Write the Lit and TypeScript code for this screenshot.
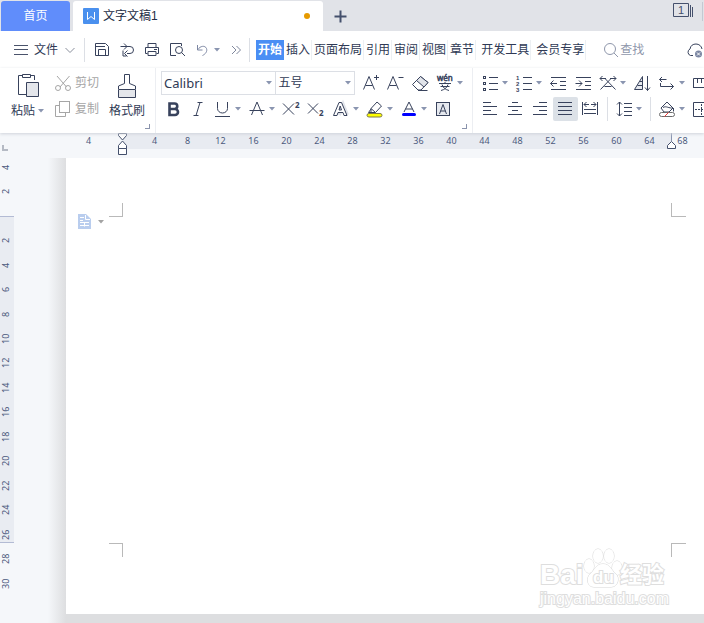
import { LitElement, html, svg, css, nothing, TemplateResult, SVGTemplateResult } from "lit";
import { customElement } from "lit/decorators.js";
import { classMap } from "lit/directives/class-map.js";

type Glyph = SVGTemplateResult;

const ICONS: Record<string, Glyph> = {
  save: svg`<path d="M2.500 14.500v-12h10l3 3v9z"/><path d="M5.500 14.500v-6h7v6M3 5.500h9"/>`,
  exportIcon: svg`<path d="M2.500 5.500h9.500a3.500 3.500 0 0 1 0 7H9M6 2.500l3 3-3 3M5 9.500v5.500h3.500M9.500 9.500l-3 3 3 3"/>`,
  print: svg`<path d="M5 6V2.500h8V6M4.500 12.500h-2V6.500h13v6h-2"/><path d="M5 10.500h8v4H5zM11 8.500h3"/>`,
  preview: svg`<path d="M8 14.500H2.500v-12h11V5"/><circle cx="11" cy="9" r="3.500"/><path d="M13.500 11.500l3.500 3.500"/>`,
  undo: svg`<g stroke="#7d87a3"><path d="M4.500 4v5h5M5 8.500C7 5 12 4 13.500 7.500c1 3-1 5.500-4 7"/></g>`,
  more: svg`<path stroke="#7f879c" d="M5 5l4 4-4 4M9.500 5l4 4-4 4"/>`,
  growFont: svg`<path d="M2.500 15.500L8 2.500l5.500 13M4.500 11.500h7M13 3.500h5M15.500 1v5"/>`,
  shrinkFont: svg`<path d="M1.500 15.500L7 2.500l5.500 13M3.500 11.500h7M12.500 3.500h5"/>`,
  eraser: svg`<path d="M1.500 10.500l8-8 7.500 6-7 7.500H7z"/><path fill="#e1e4ea" d="M5.500 6.500l4-4L17 8.500l-4 4.500z"/><path d="M7 16.500h9.500"/>`,
  pinyin: svg`<text x="1" y="7" font-size="8" stroke-width=".5" fill="#38425c">wén</text><path d="M3 9.500h12M9 8v2M4.500 12.500h9M5 16.500c4-1 6-3 7-6M13 16.500c-4-1-6-3-7-6"/>`,
  bold: svg`<path stroke-width="2.600" d="M5.500 3.500h5a2.700 2.700 0 0 1 0 5.500H5.500zM5.500 9H11a3 3 0 0 1 0 6H5.500z"/>`,
  italic: svg`<path d="M8.500 2.500h5M4.500 15.500h5M11 2.500l-4 13"/>`,
  underline: svg`<path d="M3.500 2v6.500a5 4.500 0 0 0 10 0V2M1 16.500h15"/>`,
  strike: svg`<path d="M3.500 15L9 2l5.500 13M1.500 10.500h15"/>`,
  superscript: svg`<path d="M1 3.500l11 11M12 3.500L1 14.500"/><text x="13" y="8" font-size="8" font-weight="700" stroke="none" fill="#38425c">2</text>`,
  subscript: svg`<path d="M1 3.500l10 10M11 3.500L1 13.500"/><text x="12" y="16" font-size="8" font-weight="700" stroke="none" fill="#38425c">2</text>`,
  textEffect: svg`<path stroke="#e1e4ea" stroke-width="4" d="M7 15l4-10 4 10"/><path fill="#fff" d="M1.500 15.500L7 2.500h2.500l5.500 13h-3l-1-3H6l-1 3zM7 10h2.500L8.200 6z"/>`,
  highlighter: svg`<path fill="#fff" d="M5 8.500l6-6.500 4.500 4-6 6.500H5z"/><path d="M5 8.500l4.500 4M5 9l-2.500 3.500h3"/><rect x="1" y="13.500" width="15" height="3.500" rx="2" fill="#ff0" stroke="#7e7a4a"/>`,
  fontColor: svg`<path d="M4 12L9 2l5 10M5.500 9h7"/><rect x="2" y="13" width="14" height="3" rx="1.500" fill="#00f" stroke="none"/>`,
  charShade: svg`<rect x="2.500" y="2.500" width="13" height="13" fill="#e6e9ef"/><path d="M5.500 14L9 4.500l3.500 9.500M6.500 11h5"/>`,
  bullets: svg`<g fill="#fff"><rect x="2.500" y="2.500" width="2" height="2"/><rect x="2.500" y="8.500" width="2" height="2"/><rect x="2.500" y="14.500" width="2" height="2"/></g><path d="M8 3.500h9M8 9.500h9M8 15.500h9"/>`,
  numbers: svg`<g class="digits"><text x="1" y="6">1</text><text x="1" y="12">2</text><text x="1" y="18">3</text></g><path d="M8 3.500h9M8 9.500h9M8 15.500h9"/>`,
  outdent: svg`<path d="M2 3.500h15M11 7.500h6M11 11.500h6M2 15.500h15M1.500 9.500H8M4.500 6.500l-3 3 3 3"/>`,
  indent: svg`<path d="M2 3.500h15M11 7.500h6M11 11.500h6M2 15.500h15M1.500 9.500H8M5 6.500l3 3-3 3"/>`,
  asian: svg`<path d="M1 4.500h6M11 4.500h6M3.500 2L1 4.500 3.500 7M14.500 2L17 4.500 14.500 7M1.500 15.500L12 4.500M16.500 15.500L6 4.500M5.500 12.500h7"/>`,
  sort: svg`<path fill="#e6e9ef" d="M1.500 15.500L9.500 2.500v13z"/><path d="M4.500 11.500h5M7 7.500h2.500M14.500 2v14.500M12 13.500l2.500 3 2.500-3"/>`,
  wrap: svg`<path d="M8.500 5.500h-7M4 3L1.500 5.500 4 8M2.500 9v3.500h13M12.500 9.500L15.500 12.500l-3 3"/>`,
  tabStops: svg`<path d="M1.500 14V4.500H20M5.500 5v4M9.500 5v4M13.500 5v4M1.500 13.500h18"/>`,
  alignLeft: svg`<path d="M2 2.500h8M2 6.500h14M2 10.500h8M2 14.500h14"/>`,
  alignCenter: svg`<path d="M6 2.500h6M2 6.500h14M6 10.500h6M2 14.500h14"/>`,
  alignRight: svg`<path d="M8 2.500h8M2 6.500h14M8 10.500h8M2 14.500h14"/>`,
  justify: svg`<path d="M2 2.500h14M2 6.500h14M2 10.500h14M2 14.500h14"/>`,
  distribute: svg`<path d="M1.500 2v13M16.500 2v13M3 4.500h5M10 4.500h5M5.500 2L3 4.500 5.500 7M12.500 2L15 4.500 12.500 7M3 9.500h12M3 13.500h12"/>`,
  lineSpacing: svg`<path d="M4.500 2v14M2 4.500L4.500 2 7 4.500M2 13.500L4.500 16 7 13.500M9 3.500h8M9 7.500h8M9 11.500h8M9 15.500h8"/>`,
  shading: svg`<path fill="#fff" d="M3 8l6-6 6 6-4 4H6z"/><path d="M5 7.500c3-2 6 1 10 .5M15.500 8v3.500"/><rect x="1.500" y="12.500" width="15" height="4" rx="2" fill="#fff" stroke="#6c6c6c"/><path stroke="#f03b3b" d="M6.500 16.500l4-4"/>`,
  borders: svg`<path d="M1.500 2.500h15v14h-15z"/><path stroke-dasharray="2 1" d="M3 9.500h12M9.500 4v11"/>`,
  scissors: svg`<g stroke="#a6a6a6"><path d="M3 2l9.500 11M15.500 2L6 13"/><circle cx="4" cy="14" r="2.500"/><circle cx="14" cy="14" r="2.500"/></g>`,
  copy: svg`<g stroke="#a6a6a6"><path d="M5.500 5.500h-4v11h10v-4"/><rect x="5.500" y="1.500" width="10" height="11"/></g>`,
  search: svg`<g stroke="#8f97ab"><circle cx="8" cy="8" r="5.500"/><path d="M12 12l4 4"/></g>`,
  cloud: svg`<path d="M7 14.500H4.500a3.500 3.500 0 0 1-.5-6.500C4.500 4.500 7 3 10 3c3 0 5.500 2 6 5"/><circle cx="12.500" cy="13" r="3.500" fill="#7c87a3" stroke="none"/><path stroke="#fff" d="M11 11.500l3 3M14 11.500l-3 3"/>`,
};

const icon = (name: string) => html`<svg class="icon" viewBox="0 0 18 18" aria-hidden="true">${ICONS[name]}</svg>`;
const caret = html`<svg class="caret" viewBox="0 0 6 4" aria-hidden="true"><path d="M0 0h6L3 3.500z"/></svg>`;

interface Tool {
  icon: string;
  label: string;
  menu?: boolean;
  active?: boolean;
}

const t = (icon: string, label: string, menu = false, active = false): Tool => ({ icon, label, menu, active });

const tool = (d: Tool): TemplateResult => html`
  <button class=${classMap({ tool: true, split: !!d.menu, active: !!d.active })} aria-label=${d.label} title=${d.label}>
    ${icon(d.icon)}${d.menu ? caret : nothing}
  </button>`;

const QUICK = [t("save", "保存"), t("exportIcon", "输出"), t("print", "打印"), t("preview", "打印预览"), t("undo", "撤消", true), t("more", "更多")];
const FONT_SIZE = [t("growFont", "增大字号"), t("shrinkFont", "减小字号"), t("eraser", "清除格式"), t("pinyin", "拼音指南", true)];
const FONT_STYLE = [
  t("bold", "加粗"), t("italic", "倾斜"), t("underline", "下划线", true), t("strike", "删除线", true),
  t("superscript", "上标"), t("subscript", "下标"), t("textEffect", "文字效果", true),
  t("highlighter", "突出显示", true), t("fontColor", "字体颜色", true), t("charShade", "字符底纹"),
];
const PARA_TOP = [
  t("bullets", "项目符号", true), t("numbers", "编号", true), t("outdent", "减少缩进量"), t("indent", "增加缩进量"),
  t("asian", "中文版式", true), t("sort", "排序"), t("wrap", "显示编辑标记", true), t("tabStops", "制表位"),
];
const ALIGN = [
  t("alignLeft", "左对齐"), t("alignCenter", "居中对齐"), t("alignRight", "右对齐"),
  t("justify", "两端对齐", false, true), t("distribute", "分散对齐"),
];
const MENUS = ["开始", "插入", "页面布局", "引用", "审阅", "视图", "章节"];
const EXTRA_MENUS = ["开发工具", "会员专享"];

const H_MARKS = ["4", "", ...Array.from({ length: 17 }, (_, i) => String((i + 1) * 4))];
const V_MARKS = ["4", "2", "", ...Array.from({ length: 15 }, (_, i) => String((i + 1) * 2))];

@customElement("app-root")
export class AppRoot extends LitElement {
  static styles = css`
    :host {
      display: flex;
      flex-direction: column;
      min-height: 100vh;
      overflow: hidden;
      font: 12px/16px "Liberation Sans", "Noto Sans CJK SC", sans-serif;
      color: #2f3a55;
      background: #f5f7fa;
    }
    * { box-sizing: border-box; }
    button, input, select {
      font: inherit;
      color: inherit;
      border: 0;
      background: none;
      padding: 0;
      margin: 0;
      outline: 0;
    }
    svg { display: block; flex: none; overflow: visible; }
    .icon { width: 18px; height: 18px; }
    .icon, .big { fill: none; stroke: #38425c; font-family: "Noto Sans", sans-serif; }
    .digits { font: 700 6px "Liberation Sans", sans-serif; stroke: none; fill: #38425c; }
    .caret { width: 6px; height: 4px; fill: #8a95b0; }

    .tabs {
      display: flex;
      height: 31px;
      padding: 1px 1px 0;
      background: #e1e3e8;
    }
    .home {
      width: 69px;
      margin-right: 3px;
      border-radius: 3px 3px 0 0;
      background: #608dfb;
      color: #fff;
    }
    .doc {
      display: flex;
      align-items: center;
      gap: 4px;
      width: 250px;
      padding: 0 13px 0 10px;
      border-radius: 3px 3px 0 0;
      background: #fff;
      color: #222c44;
    }
    .logo { width: 16px; height: 16px; }
    .unsaved {
      width: 6px;
      height: 6px;
      margin-left: auto;
      border-radius: 50%;
      background: #e69a00;
    }
    .add { width: 13px; margin-left: 11px; }
    .add svg, .windows svg { fill: none; stroke: #44506c; }
    .windows {
      display: flex;
      align-items: flex-start;
      gap: 9px;
      margin-left: auto;
      padding-top: 1px;
    }
    .edge { width: 1px; height: 19px; background: #c4c9d2; }

    .menubar {
      display: flex;
      align-items: center;
      height: 37px;
      background: #fff;
    }
    .file { display: flex; align-items: center; gap: 6px; padding: 0 8px 0 14px; }
    .file svg { fill: none; stroke: #4a536b; }
    .rule { width: 1px; height: 24px; flex: none; background: #dcdfe5; }
    .row { display: flex; align-items: center; height: 24px; }
    .quick { padding-left: 5px; }
    .tool {
      display: flex;
      align-items: center;
      flex: none;
      gap: 3px;
      width: 25px;
      height: 24px;
      padding-left: 3px;
    }
    .split { width: 34px; }
    .active { background: #dce1e7; border-radius: 2px; }
    nav { display: flex; padding-left: 6px; }
    nav a {
      height: 20px;
      padding: 2px 1px 2px 2px;
      border-right: 1px solid #edf0f3;
      color: inherit;
      text-decoration: none;
      white-space: nowrap;
    }
    nav a.current {
      background: #4a8ef4;
      border-color: #4a8ef4;
      color: #fff;
      font-weight: 700;
    }
    nav a.extra { margin-left: 3px; }
    .search { display: flex; align-items: center; margin-left: 16px; color: #8f97ab; }
    .search input { width: 48px; }
    .search input::placeholder { color: #8f97ab; opacity: 1; }
    .cloud { margin-left: auto; }

    .ribbon {
      display: flex;
      height: 65px;
      flex: none;
      background: #fff;
      box-shadow: 0 1px 3px #cfd3da;
      position: relative;
      z-index: 1;
    }
    .group {
      position: relative;
      display: flex;
      flex-direction: column;
      gap: 2px;
      flex: none;
      padding: 3px 5px 0;
      border-right: 1px solid #eceef2;
    }
    .group:last-child { border: 0; }
    .font { width: 317px; }
    .clipboard { flex-direction: row; gap: 10px; width: 156px; padding-left: 11px; }
    .tall {
      display: flex;
      flex-direction: column;
      align-items: center;
      gap: 4px;
      height: 48px;
    }
    .tall span { display: flex; align-items: center; gap: 3px; white-space: nowrap; }
    .big { width: 24px; height: 28px; }
    .stack { display: flex; flex-direction: column; gap: 2px; }
    .side { display: flex; align-items: center; gap: 3px; height: 24px; color: #a6a6a6; }
    .launcher {
      position: absolute;
      right: 5px;
      bottom: 4px;
      width: 5px;
      height: 5px;
      border: solid #8a93ac;
      border-width: 0 1px 1px 0;
    }
    .pick {
      position: relative;
      display: flex;
      align-items: center;
      height: 24px;
      border: 1px solid #dcdfe5;
    }
    .pick select {
      appearance: none;
      width: 100%;
      height: 22px;
      padding-left: 2px;
      font: 13px/20px "Noto Sans", "Noto Sans CJK SC", sans-serif;
    }
    .pick .caret { position: absolute; right: 3px; pointer-events: none; }
    .family { width: 116px; }
    .size { width: 80px; margin: 0 3px 0 -1px; }
    .size select { font-size: 12px; }
    .row .rule { margin: 0 4px; }

    .work { display: grid; grid-template-columns: 14px minmax(0, 1fr); flex: 1; }
    .corner { height: 22px; padding: 12px 0 0 2px; }
    .corner i { display: block; width: 6px; height: 6px; border: solid #b5bac4; border-width: 0 0 2px 2px; }
    .vruler {
      display: grid;
      grid-auto-rows: 24px 25px;
      background: linear-gradient(#f5f7fa 61px, #b3bbd4 61px 62px, #e9ecf2 62px 387px, #b3bbd4 387px 388px, #f5f7fa 388px);
    }
    .vruler span {
      writing-mode: vertical-rl;
      transform: rotate(180deg);
      text-align: center;
      line-height: 12px;
    }
    .vruler, .hruler { font-family: "Noto Sans", sans-serif; font-size: 9px; color: #4c5a7d; }
    .hruler {
      position: relative;
      display: flex;
      height: 16px;
      padding-left: 58px;
      margin-bottom: 9px;
      background: linear-gradient(90deg, #f5f7fa 108px, #e8ebf1 108px 657px, #f5f7fa 657px);
    }
    .hruler span { width: 33px; flex: none; text-align: center; }
    .marker { position: absolute; top: 0; width: 11px; height: 23px; fill: #fff; stroke: #44506c; }
    .first { left: 103px; }
    .last { left: 652px; }
    .canvas {
      display: flex;
      flex-direction: column;
      min-width: 0;
    }
    .desk {
      display: flex;
      flex: 1;
      padding: 0 0 9px 52px;
      background: linear-gradient(90deg, #f5f7fa 34px, #dddee0 52px);
    }
    .page {
      position: relative;
      display: flex;
      flex-direction: column;
      justify-content: space-between;
      flex: 1;
      padding: 45px 18px 57px 43px;
      background: #fff;
    }
    .crops { display: flex; justify-content: space-between; }
    .crops i { width: 14px; height: 14px; border: 0 solid #b9b9b9; }
    .crops i:first-child { border-right-width: 1px; }
    .crops i:last-child { width: 15px; border-left-width: 1px; }
    .top i { border-bottom-width: 1px; }
    .bottom i { border-top-width: 1px; }
    .tag {
      position: absolute;
      left: 12px;
      top: 56px;
      display: flex;
      align-items: center;
      gap: 7px;
    }
    .tag .caret { fill: #a3a3a3; }
    .mark {
      position: absolute;
      right: 36px;
      bottom: 4px;
      width: 130px;
      height: 66px;
      fill: #fff;
      stroke: #dedede;
      font-family: "Liberation Sans", "Noto Sans CJK SC", sans-serif;
      paint-order: stroke;
      stroke-width: 2px;
    }
    .mark ellipse, .mark path { stroke-width: 1px; stroke: #d6d6d6; }
  `;

  render() {
    return html`
      <header class="tabs">
        <button class="home">首页</button>
        <div class="doc">
          <svg class="logo" viewBox="0 0 16 16" aria-hidden="true">
            <rect width="16" height="16" rx="1" fill="#4a90ee" />
            <path d="M4.500 4v7.500L8 8.500l3.500 3V4" fill="none" stroke="#fff" />
          </svg>
          <span>文字文稿1</span>
          <i class="unsaved"></i>
        </div>
        <button class="add" aria-label="新建">
          <svg width="13" height="13" viewBox="0 0 13 13"><path stroke-width="2" d="M0.500 6.500h12M6.500 0.500v12" /></svg>
        </button>
        <div class="windows">
          <svg width="21" height="16" viewBox="0 0 21 16" aria-hidden="true">
            <path d="M1.500 1.500h15v13h-15zM18.500 3v12M20.500 5v10" />
            <text x="6" y="12" font-size="11" stroke="none" fill="#44506c">1</text>
          </svg>
          <i class="edge"></i>
        </div>
      </header>

      <div class="menubar">
        <button class="file">
          <svg width="14" height="11" viewBox="0 0 14 11"><path d="M0 1.500h14M0 5.500h14M0 10.500h14" /></svg>
          文件
          <svg width="12" height="8" viewBox="0 0 12 8"><path stroke="#8a8f9c" d="M1.500 2L6 6.500 10.500 2" /></svg>
        </button>
        <i class="rule"></i>
        <div class="row quick">${QUICK.map(tool)}</div>
        <i class="rule"></i>
        <nav>
          ${MENUS.map((m, i) => html`<a href="#" class=${classMap({ current: i === 0 })}>${m}</a>`)}
          ${EXTRA_MENUS.map((m) => html`<a href="#" class="extra">${m}</a>`)}
        </nav>
        <label class="search">${icon("search")}<input type="text" placeholder="查找" aria-label="查找" /></label>
        <button class="cloud" aria-label="云同步">${icon("cloud")}</button>
      </div>

      <section class="ribbon">
        <div class="group clipboard">
          <button class="tall">
            <svg class="big" viewBox="0 0 24 28" aria-hidden="true">
              <path d="M6 4.500H2.500v19h8M14 4.500h4.500V9" />
              <path d="M6.500 3.500h8v3h-8z" />
              <path fill="#e4e6eb" d="M10.500 11.500h12v14h-12z" />
            </svg>
            <span>粘贴${caret}</span>
          </button>
          <div class="stack">
            <button class="side">${icon("scissors")}剪切</button>
            <button class="side">${icon("copy")}复制</button>
          </div>
          <button class="tall">
            <svg class="big" viewBox="0 0 24 28" aria-hidden="true">
              <path d="M3.500 18v-3l6-2.500V3.500h5v9l6 2.500v3" />
              <path fill="#e4e6eb" d="M3.500 18.500h17v8h-17z" />
            </svg>
            <span>格式刷</span>
          </button>
          <i class="launcher"></i>
        </div>

        <div class="group font">
          <div class="row">
            <div class="pick family">
              <select aria-label="字体"><option>Calibri</option></select>${caret}
            </div>
            <div class="pick size">
              <select aria-label="字号"><option>五号</option></select>${caret}
            </div>
            ${FONT_SIZE.map(tool)}
          </div>
          <div class="row">${FONT_STYLE.map(tool)}</div>
          <i class="launcher"></i>
        </div>

        <div class="group">
          <div class="row">${PARA_TOP.map(tool)}</div>
          <div class="row">
            ${ALIGN.map(tool)}
            <i class="rule"></i>
            ${tool(t("lineSpacing", "行距", true))}
            <i class="rule"></i>
            ${tool(t("shading", "底纹颜色", true))}
            ${tool(t("borders", "边框"))}
          </div>
        </div>
      </section>

      <main class="work">
        <div>
          <div class="corner"><i></i></div>
          <div class="vruler">${V_MARKS.map((m) => html`<span>${m}</span>`)}</div>
        </div>
        <div class="canvas">
          <div class="hruler">
            ${H_MARKS.map((m) => html`<span>${m}</span>`)}
            <svg class="marker first" viewBox="0 0 11 23">
              <path d="M1.500 0.500h8v2L5.500 7l-4-4.500zM5.500 8l4 4.500v3h-8v-3zM1.500 15.500h8v6h-8z" />
            </svg>
            <svg class="marker last" viewBox="0 0 11 23">
              <path stroke="#8a95b0" d="M5.500 0v8" /><path d="M5.500 8.500l4 4v3h-8v-3z" />
            </svg>
          </div>
          <div class="desk">
            <article class="page">
              <div class="crops top"><i></i><i></i></div>
              <button class="tag" aria-label="粘贴选项">
                <svg width="13" height="15" viewBox="0 0 13 15">
                  <path fill="#b9cdee" d="M0 0h8l5 5v10H0z" />
                  <path fill="none" stroke="#fff" d="M2 3.500h4M7.500 1v4.500H12M2 6.500h3M2 8.500h9M2 11.500h9M6.500 8.500v4" />
                </svg>
                ${caret}
              </button>
              <div class="crops bottom"><i></i><i></i></div>
              <svg class="mark" viewBox="0 0 130 66" aria-hidden="true">
                <text x="2" y="40" font-size="28" font-weight="700">Bai</text>
                <ellipse cx="51" cy="22" rx="5" ry="7" />
                <ellipse cx="60" cy="12" rx="5" ry="7" />
                <ellipse cx="71" cy="12" rx="5" ry="7" />
                <ellipse cx="79" cy="24" rx="5" ry="7" />
                <path d="M65 20c7 0 8 6 13 10 4 4 2 13-5 13H56c-7 0-8-9-4-13 5-4 6-10 13-10z" />
                <text x="55" y="39" font-size="17" font-weight="700">du</text>
                <text x="82" y="38" font-size="22" font-weight="700">经验</text>
                <text x="2" y="60" font-size="16">jingyan.baidu.com</text>
              </svg>
            </article>
          </div>
        </div>
      </main>
    `;
  }
}
